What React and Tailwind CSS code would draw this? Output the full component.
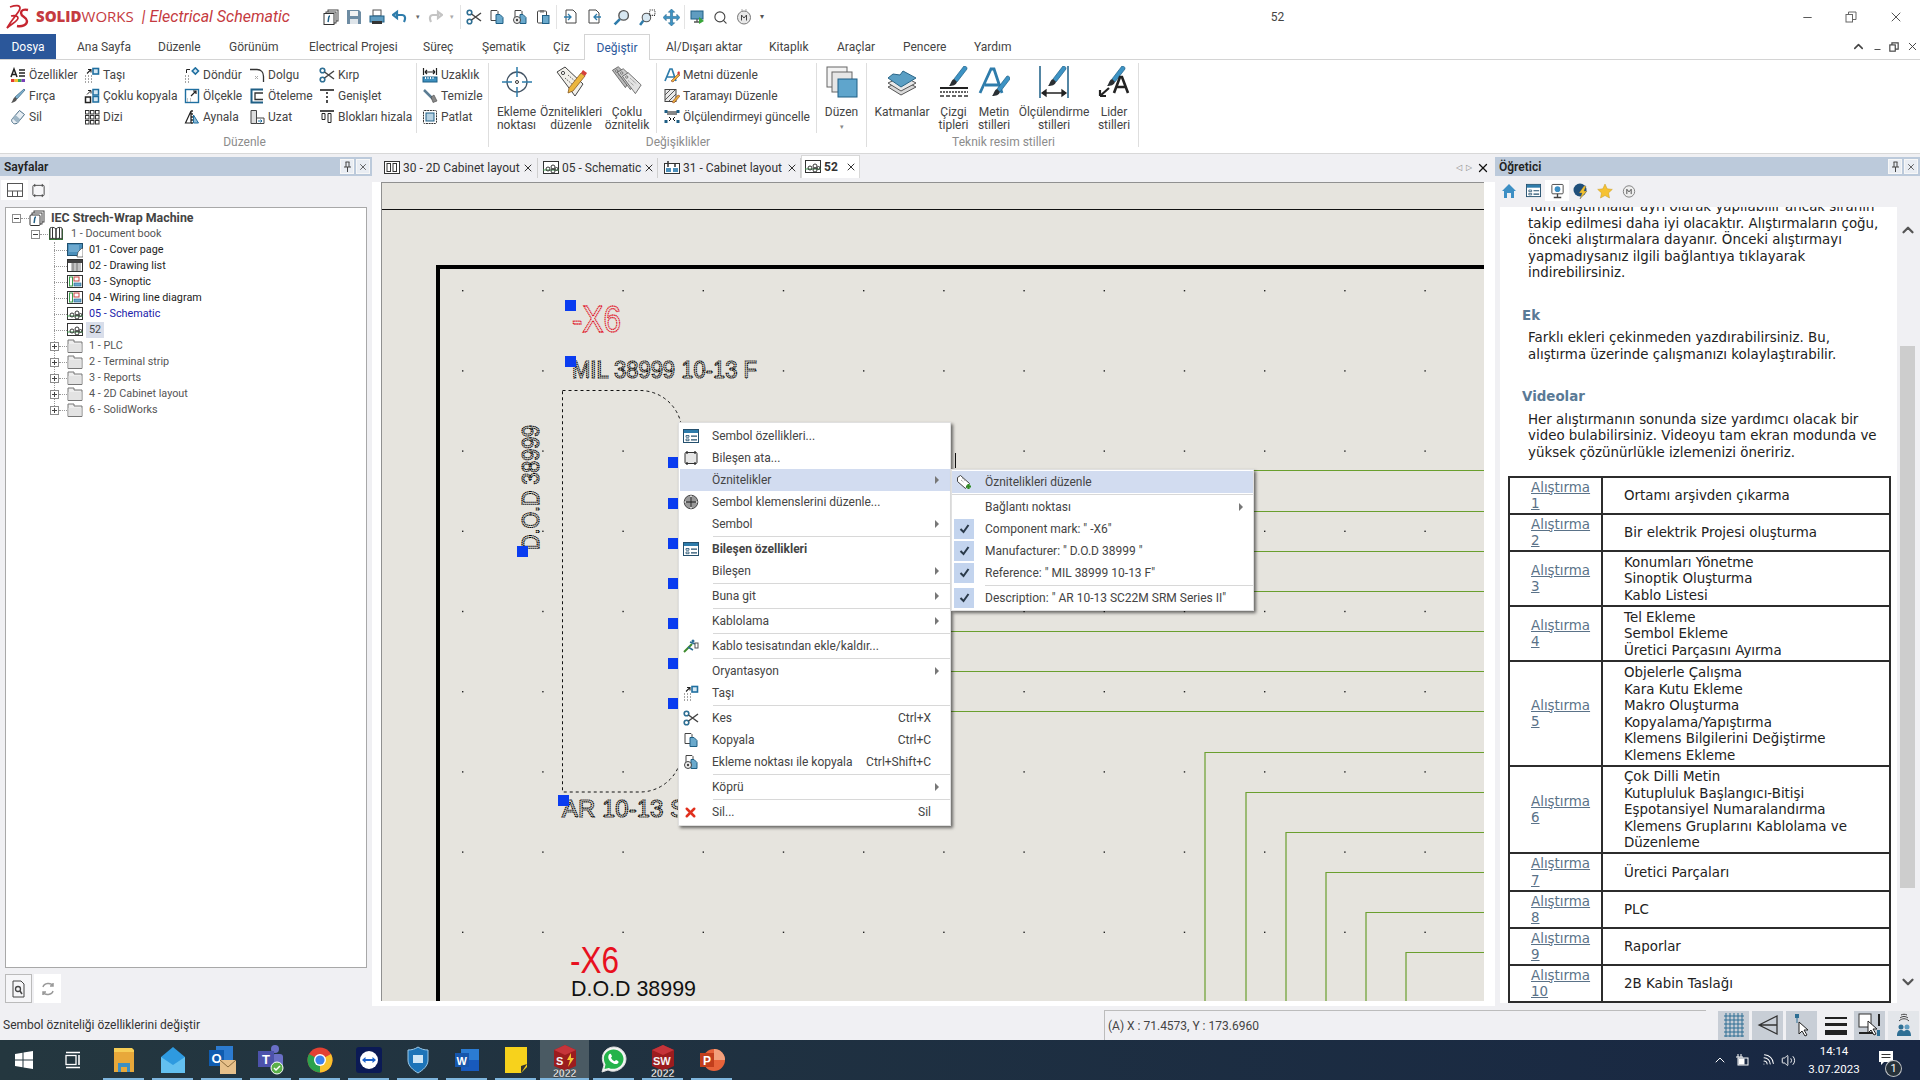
import React from "react";
import { ChevronUp, ChevronDown, Search, Wifi, Volume2, Minus, X } from "lucide-react";

const S = ({ s = 16, children }) => (
  <svg width={s} height={s} viewBox="0 0 16 16" fill="none" className="shrink-0">{children}</svg>
);
const L = ({ s = 32, children }) => (
  <svg width={s} height={s} viewBox="0 0 32 32" fill="none" className="shrink-0">{children}</svg>
);

const Scissors = () => (
  <S>
    <circle cx="3.5" cy="3.5" r="2.3" stroke="#2e6f94" strokeWidth="1.6" />
    <circle cx="3.5" cy="12.5" r="2.3" stroke="#2e6f94" strokeWidth="1.6" />
    <path d="M5.5 5L15 12M5.5 11L15 4" stroke="#444" strokeWidth="1.5" />
  </S>
);
const CopyDoc = () => (
  <S>
    <path d="M2 1.5h6l1 1v9H2z" fill="#fff" stroke="#444" />
    <path d="M7 5.5h4l3 3v6H7z" fill="#6aa9cc" stroke="#1f5f85" />
  </S>
);
const CopyPoint = () => (
  <S>
    <path d="M3 1.5h6l1 1v8H3z" fill="#fff" stroke="#444" />
    <path d="M8 5.5h3l3 3v6H8z" fill="#6aa9cc" stroke="#1f5f85" />
    <circle cx="5" cy="11" r="3.5" fill="#eee" stroke="#444" />
    <circle cx="5" cy="11" r="1.2" fill="#444" />
  </S>
);
const Paste = () => (
  <S>
    <rect x="2.5" y="2" width="9" height="12" rx="1" fill="#fff" stroke="#444" />
    <rect x="5" y="1" width="4" height="2.5" fill="#777" />
    <rect x="7.5" y="6.5" width="6.5" height="8" fill="#6aa9cc" stroke="#1f5f85" />
  </S>
);
const MoveIc = () => (
  <S>
    <path d="M1 9h1M4 9h1M7 9h1M1 12h1M4 12h1M7 12h1M1 15h1M4 15h1M7 15h1" stroke="#888" strokeWidth="1.4" />
    <rect x="9" y="1.5" width="5.5" height="5.5" fill="#d6e8f3" stroke="#1f6fa0" strokeWidth="1.6" />
    <path d="M3 6.5L6.5 3M4 2.5h3v3" stroke="#222" strokeWidth="1.1" />
  </S>
);
const ListIc = ({ s = 16 }) => (
  <S s={s}>
    <rect x="0.5" y="1.5" width="15" height="13" fill="#fff" stroke="#24506e" />
    <rect x="1" y="2" width="14" height="3" fill="#2e7cab" />
    <path d="M3 7.5h3v1.7H3zM3 11h3v1.7H3z" stroke="#24506e" strokeWidth=".8" />
    <path d="M8 8.2h6M8 11.8h6" stroke="#24506e" strokeWidth="1.2" />
  </S>
);
const CompIc = () => (
  <S>
    <rect x="2" y="2.5" width="12" height="11" rx="1" fill="#e6e6e6" stroke="#333" />
    <path d="M4 1v3M12 1v3M4 12v3M12 12v3" stroke="#333" strokeWidth="1.3" />
  </S>
);
const PlusCircle = () => (
  <S>
    <circle cx="8" cy="8" r="6.8" fill="#999" stroke="#444" />
    <path d="M8 1.5v13M1.5 8h13" stroke="#fff" strokeWidth="1.2" />
    <path d="M8 3v10M3 8h10" stroke="#333" strokeWidth="1.4" />
  </S>
);
const Cable = () => (
  <S>
    <path d="M1 14L9 6" stroke="#3d8a2c" strokeWidth="2" />
    <path d="M5 9l5 3M7 4l5 2" stroke="#2e6f94" strokeWidth="1.5" />
    <circle cx="10" cy="3" r="1.5" fill="#2e6f94" />
    <rect x="12" y="5" width="3" height="5" stroke="#555" />
  </S>
);
const TagAdd = () => (
  <S>
    <path d="M1.5 3.5l3-2 9 8-4 5-8-7z" fill="#fff" stroke="#444" />
    <path d="M5 6l3 2.5M6.5 4.5l3 2.5" stroke="#888" strokeDasharray="1 1" />
    <path d="M10 12.5h5M12.5 10v5" stroke="#2f8a24" strokeWidth="2.2" />
  </S>
);
const Brush = ({ x = 0, y = 0, k = 1 }) => (
  <g transform={`translate(${x} ${y}) scale(${k})`}>
    <path d="M21 1c2 0 3 1 3 3L14 17l-3-3z" fill="#3d93c4" stroke="#1d5f86" strokeWidth=".7" />
    <path d="M11 14l3 3c-1 3-4 4-8 4 2-2 2-6 5-7z" fill="#2a2f33" />
  </g>
);

const smallIcons = {
  props: (
    <S>
      <path d="M1 10L4 2l3 8M2.2 7.5h3.6" stroke="#222" strokeWidth="1.5" />
      <path d="M9 3h6M9 6h6M9 9h6" stroke="#222" strokeWidth="1.4" />
      <rect x="1" y="12" width="3.5" height="3" fill="#e23a2e" />
      <rect x="4.5" y="12" width="3.5" height="3" fill="#f2c12e" />
      <rect x="8" y="12" width="3.5" height="3" fill="#3aa655" />
      <rect x="11.5" y="12" width="3.5" height="3" fill="#7a3fb8" />
    </S>
  ),
  brush: (
    <S>
      <path d="M14 1l1 1-8 9-2-2z" fill="#7fb2d0" stroke="#33607c" strokeWidth=".7" />
      <path d="M5 9l2 2c-1 3-3 3-6 4 1.500-1 2-5 4-6z" fill="#555" />
    </S>
  ),
  eraser: (
    <S>
      <path d="M9.500 1.500l5 4-7 8.500c-2 1.300-4 1-5-.5-1.300-1.500-1-3 0-4z" fill="#e8eef3" stroke="#4a6d85" />
      <path d="M2.500 9.500l5 4.500 3-3.500-5-4.500z" fill="#9fb6c6" />
    </S>
  ),
  move: <MoveIc />,
  multi: (
    <S>
      <rect x="9" y="1.500" width="5.500" height="5.500" fill="#d6e8f3" stroke="#1f6fa0" strokeWidth="1.500" />
      <rect x="9" y="8.500" width="5.500" height="5.500" fill="#d6e8f3" stroke="#1f6fa0" strokeWidth="1.500" />
      <rect x="1.500" y="9" width="5" height="5.500" stroke="#222" strokeWidth="1.500" />
      <path d="M3 6.500L6.500 3M4 2.500h3v3" stroke="#222" />
    </S>
  ),
  grid: (
    <S>
      {[1, 6, 11].map((x) =>
        [1, 6, 11].map((y) => <rect key={`${x}${y}`} x={x + 0.5} y={y + 0.5} width="3.500" height="3.500" fill="#fff" stroke="#333" />)
      )}
    </S>
  ),
  rotate: (
    <S>
      <path d="M1 9h1M4 9h1M1 12h1M4 12h1M1 15h1M4 15h1" stroke="#888" strokeWidth="1.400" />
      <rect x="9" y="1.500" width="4.500" height="4.500" transform="rotate(45 11 4)" fill="#d6e8f3" stroke="#1f6fa0" strokeWidth="1.500" />
      <path d="M2.500 6V2.500H6" stroke="#222" />
    </S>
  ),
  scale: (
    <S>
      <rect x="1.500" y="1.500" width="13" height="13" stroke="#1f6fa0" strokeWidth="1.400" />
      <path d="M3 11h1M6 11h1M3 13h1M6 13h1" stroke="#888" />
      <path d="M7 8l5-5M9 3h3v3" stroke="#222" strokeWidth="1.200" />
    </S>
  ),
  mirror: (
    <S>
      <path d="M7 2L1.500 14H7z" fill="#fff" stroke="#222" strokeWidth="1.200" />
      <path d="M8 1v15" stroke="#222" strokeWidth="1.400" strokeDasharray="2 1" />
      <path d="M9.500 6l5 8h-5z" fill="#8fbcd8" stroke="#1f6fa0" />
    </S>
  ),
  fillet: (
    <S>
      <path d="M1 2.500h7c4 0 6.500 3 6.500 7V15" stroke="#333" strokeWidth="1.300" />
      <path d="M6 9l3 3M9 9l-3 3" stroke="#aaa" />
    </S>
  ),
  offset: (
    <S>
      <path d="M14 1.500H2.500v13H14" stroke="#1f5f85" strokeWidth="2" />
      <path d="M14 5H6v6.500h8" stroke="#333" strokeWidth="1.300" />
    </S>
  ),
  extend: (
    <S>
      <path d="M2 1.500h5.500v13H2z" fill="#ddd" stroke="#444" />
      <path d="M7.500 9H15v5.500H7.500z" fill="#fff" stroke="#444" />
      <path d="M9 12h4M11.500 10.500l1.500 1.500-1.500 1.500" stroke="#1f6fa0" />
    </S>
  ),
  extendLine: (
    <S>
      <path d="M1 2h14" stroke="#222" strokeWidth="1.600" />
      <path d="M8 4v2M8 8v2M8 12v3" stroke="#222" strokeWidth="1.600" />
    </S>
  ),
  align: (
    <S>
      <path d="M1 2h14" stroke="#222" strokeWidth="1.600" />
      <path d="M3 4.500h3v6H3zM9 4.500h3v9H9z" stroke="#222" />
    </S>
  ),
  distance: (
    <S>
      <path d="M1.500 1v7M14.500 1v7M3 5h10M3 5l2-2M3 5l2 2M13 5l-2-2M13 5l-2 2" stroke="#222" strokeWidth="1.200" />
      <rect x="1" y="10" width="14" height="5" fill="#3d8fbe" stroke="#1d5f86" />
      <path d="M3.500 10v2M6 10v2M8.500 10v2M11 10v2" stroke="#fff" />
    </S>
  ),
  clean: (
    <S>
      <path d="M2 2l9 9" stroke="#5b7d94" strokeWidth="2.500" />
      <path d="M9 9l3-2 3 6-4 1.500z" fill="#888" stroke="#444" strokeWidth=".6" />
    </S>
  ),
  explode: (
    <S>
      <rect x="1.500" y="1.500" width="13" height="13" rx="1" stroke="#333" strokeDasharray="2 .7" />
      <rect x="4" y="4" width="8" height="8" fill="#b7d2e3" stroke="#1f5f85" />
    </S>
  ),
  editText: (
    <S>
      <path d="M1 14L6 2h2l4 12M3 10h7" stroke="#2e7cab" strokeWidth="1.700" />
      <path d="M7 14l7-7 2 1-7 7z" fill="#e9b03a" stroke="#8d3e21" strokeWidth=".6" />
      <path d="M13 6l2-2 1 2-1 2z" fill="#d63b35" />
    </S>
  ),
  hatch: (
    <S>
      <rect x="1" y="1.500" width="11" height="12" fill="#e9e9e9" stroke="#444" />
      <path d="M1 7l5-5M1 12l10-10M5 13l7-7" stroke="#555" />
      <path d="M8 14l6-7 2 1-6 7z" fill="#e9b03a" stroke="#8d3e21" strokeWidth=".6" />
    </S>
  ),
  dim: (
    <S>
      <path d="M1 3h14M3 5h10" stroke="#111" />
      <rect x=".5" y="1" width="3" height="3" fill="#1f5f85" />
      <rect x="12.500" y="1" width="3" height="3" fill="#1f5f85" />
      <path d="M5 8l2 2-2 2M11 8l-2 2 2 2" stroke="#111" />
      <rect x=".5" y="11" width="3" height="3" fill="#1f5f85" />
      <rect x="12.500" y="11" width="3" height="3" fill="#1f5f85" />
    </S>
  ),
  scissorsSmall: <Scissors />,
};

const SmallBtn = ({ icon, label }) => (
  <div className="flex items-center gap-[3px] h-[21px] whitespace-nowrap">
    {smallIcons[icon]}
    <span>{label}</span>
  </div>
);

const Col = ({ className, items }) => (
  <div className={`flex flex-col pt-[4px] ${className}`}>
    {items.map(([icon, label]) => (
      <SmallBtn key={label} icon={icon} label={label} />
    ))}
  </div>
);

const Large = ({ className, icon, lines, arrow }) => (
  <div className={`flex flex-col items-center ${className}`}>
    <div className="h-[46px] pt-[6px] flex justify-center">{icon}</div>
    <div className="text-center leading-[13px] whitespace-nowrap">
      {lines.map((t) => (
        <div key={t}>{t}</div>
      ))}
      {arrow && <div className="text-[7px] text-[#888] leading-[12px] pt-[2px]">▾</div>}
    </div>
  </div>
);

const Sep = () => <div className="w-px h-[70px] mt-[3px] bg-[#dedede] shrink-0" />;

const Group = ({ className, title, children }) => (
  <div className={`flex flex-col h-[94px] ${className}`}>
    <div className="flex h-[74px]">{children}</div>
    <div className="text-center text-[#8c8c8c] leading-[14px] pt-px">{title}</div>
  </div>
);

const GroupEnd = () => <div className="w-px h-[84px] mt-[3px] bg-[#dedede] shrink-0" />;

const icEkleme = (
  <L>
    <circle cx="16" cy="16" r="10" stroke="#456" strokeWidth="1.300" />
    <path d="M16 1v10M16 21v10M1 16h10M21 16h10" stroke="#2e7cab" strokeWidth="1.500" />
    <circle cx="16" cy="16" r="1.500" stroke="#333" />
  </L>
);
const Tag = ({ x = 0, y = 0, fill = "#f2f0ea" }) => (
  <g transform={`translate(${x} ${y})`}>
    <path d="M2 6l8-5 18 17-8 12z" fill={fill} stroke="#444" />
    <circle cx="8" cy="7" r="1.600" fill="#fff" stroke="#444" />
    <path d="M10 12l8 7M13 9l8 7" stroke="#666" strokeDasharray="1.500 1" />
  </g>
);
const icOzn = (
  <L>
    <Tag />
    <path d="M14 22L26 7l4 3-12 15-5 2z" fill="#ecb63e" stroke="#7a4a14" strokeWidth=".7" />
    <path d="M26 7l2-3 4 3-2 3z" fill="#d6403a" />
  </L>
);
const icCoklu = (
  <L>
    <g transform="scale(.72)"><Tag fill="#b9b9b9" /></g>
    <g transform="translate(5 2) scale(.72)"><Tag fill="#cdcdcd" /></g>
    <g transform="translate(10 6) scale(.72)"><Tag fill="#e3e3e3" /></g>
  </L>
);
const icDuzen = (
  <L>
    <rect x="1" y="1" width="20" height="20" fill="#f3f3f3" stroke="#666" />
    <rect x="6" y="6" width="20" height="20" fill="#e6e6e6" stroke="#666" />
    <rect x="12" y="13" width="19" height="18" fill="#5fa5cc" stroke="#1f5f85" />
  </L>
);
const icLayers = (
  <L>
    <path d="M2 21l15-7 13 7-15 8z" fill="#d9d9d9" stroke="#555" />
    <path d="M2 17l15-7 13 7-15 8z" fill="#e8e8e8" stroke="#555" />
    <path d="M2 12l5-4 7 1 3-4 13 7-15 9z" fill="#5b9fc4" stroke="#2b6688" />
  </L>
);
const icLines = (
  <L>
    <Brush x="5" y="-1" />
    <path d="M2 22h28" stroke="#222" strokeWidth="2" />
    <path d="M2 26h28" stroke="#333" strokeWidth="1.500" strokeDasharray="2 1" />
    <path d="M2 30h28" stroke="#333" strokeWidth="1.500" strokeDasharray="4 2" />
  </L>
);
const icMetin = (
  <L>
    <path d="M2 27L13 3h3l8 24M7 19h13" stroke="#2e7cab" strokeWidth="2.800" />
    <Brush x="8" y="9" />
  </L>
);
const icOlcu = (
  <L>
    <path d="M2 0v32M30 0v32" stroke="#1d5f86" strokeWidth="1.500" />
    <Brush x="4" y="-1" />
    <path d="M4 27h24M4 27l4-3v6zM28 27l-4-3v6z" stroke="#222" strokeWidth="1.300" fill="#222" />
  </L>
);
const icLider = (
  <L>
    <Brush x="3" y="-1" />
    <path d="M2 30l9-8M2 30v-6M2 30h6" stroke="#222" strokeWidth="2.200" />
    <path d="M16 27l6-16h2l6 16M19 21h9" stroke="#222" strokeWidth="2.600" />
  </L>
);

const GroupPad = () => <div className="w-[10px] shrink-0" />;

const Ribbon = () => (
  <div className="flex h-[94px] shrink-0 bg-white border-b border-[#d8d8d8] text-[12px] text-[#444]">
    <Group className="w-[489px]" title="Düzenle">
      <GroupPad />
      <Col className="w-[74px]" items={[["props", "Özellikler"], ["brush", "Fırça"], ["eraser", "Sil"]]} />
      <Col className="w-[100px]" items={[["move", "Taşı"], ["multi", "Çoklu kopyala"], ["grid", "Dizi"]]} />
      <Col className="w-[65px]" items={[["rotate", "Döndür"], ["scale", "Ölçekle"], ["mirror", "Aynala"]]} />
      <Col className="w-[70px]" items={[["fillet", "Dolgu"], ["offset", "Öteleme"], ["extend", "Uzat"]]} />
      <Col className="w-[97px]" items={[["scissorsSmall", "Kırp"], ["extendLine", "Genişlet"], ["align", "Blokları hizala"]]} />
      <Sep />
      <Col className="ml-[5px] w-[66px]" items={[["distance", "Uzaklık"], ["clean", "Temizle"], ["explode", "Patlat"]]} />
      <GroupEnd />
    </Group>
    <Group className="w-[378px]" title="Değişiklikler">
      <Large className="w-[55px]" icon={icEkleme} lines={["Ekleme", "noktası"]} />
      <Large className="w-[54px]" icon={icOzn} lines={["Öznitelikleri", "düzenle"]} />
      <Large className="w-[58px]" icon={icCoklu} lines={["Çoklu", "öznitelik"]} />
      <Sep />
      <Col className="ml-[7px] w-[152px]" items={[["editText", "Metni düzenle"], ["hatch", "Taramayı Düzenle"], ["dim", "Ölçülendirmeyi güncelle"]]} />
      <Sep />
      <Large className="w-[49px]" icon={icDuzen} lines={["Düzen"]} arrow />
      <GroupEnd />
    </Group>
    <Group className="w-[273px]" title="Teknik resim stilleri">
      <Large className="w-[70px]" icon={icLayers} lines={["Katmanlar"]} />
      <Large className="w-[33px]" icon={icLines} lines={["Çizgi", "tipleri"]} />
      <Large className="w-[48px]" icon={icMetin} lines={["Metin", "stilleri"]} />
      <Large className="w-[72px]" icon={icOlcu} lines={["Ölçülendirme", "stilleri"]} />
      <Large className="w-[48px]" icon={icLider} lines={["Lider", "stilleri"]} />
      <GroupEnd />
    </Group>
  </div>
);

const Qat = ({ children, className = "" }) => <div className={`flex items-center justify-center ${className}`}>{children}</div>;

const TitleBar = () => (
  <div className="flex items-center h-[34px] shrink-0 bg-white relative">
    <svg width="26" height="26" viewBox="0 0 26 26" fill="none" className="ml-[4px] shrink-0">
      <path d="M6 3c6-2 10-2 10 1 0 4-6 8-13 20 6-5 11-7 11-10 0-2-3-3-7-2" stroke="#c6252f" strokeWidth="1.700" />
      <path d="M24 6c-4-1-7 0-7 3 0 4 6 4 6 8 0 4-5 6-10 5" stroke="#c6252f" strokeWidth="2.400" />
    </svg>
    <div className="ml-[6px] w-[257px] text-[#c53a40] whitespace-nowrap flex items-baseline font-['Open_Sans',sans-serif]">
      <span className="text-[15px] font-extrabold">SOLID</span>
      <span className="text-[15px]">WORKS</span>
      <span className="text-[16px] italic ml-[8px] font-['Roboto',sans-serif]">| Electrical Schematic</span>
    </div>
    <div className="flex items-center ml-[26px]">
      <Qat className="w-[23px]"><svg width="16" height="16" viewBox="0 0 16 16" fill="none"><rect x="5" y="1" width="10" height="11" fill="#fff" stroke="#444" /><rect x="3" y="3" width="10" height="11" fill="#fff" stroke="#444" /><rect x="1" y="4.500" width="10" height="11" fill="#fff" stroke="#333" /><path d="M7 7c-2 0-1 3-2 6" stroke="#1f5f85" strokeWidth="1.500" /></svg></Qat>
      <Qat className="w-[23px]"><svg width="16" height="16" viewBox="0 0 16 16"><path d="M1 1h12l2 2v12H1z" fill="#6e8ca3" /><rect x="4" y="2" width="8" height="5" fill="#f3f3f3" /><rect x="4" y="10" width="8" height="5" fill="#dfe5ea" /></svg></Qat>
      <Qat className="w-[23px]"><svg width="16" height="16" viewBox="0 0 16 16"><rect x="4" y="1" width="8" height="6" fill="#fff" stroke="#555" /><rect x="1" y="7" width="14" height="6" fill="#5f9cc0" stroke="#1f5f85" /><rect x="3" y="12" width="10" height="3" fill="#333" /></svg></Qat>
      <Qat className="w-[23px]"><svg width="16" height="16" viewBox="0 0 16 16" fill="none"><path d="M1 6l4-3v6zM5 6h5c3 0 4 3 2 7" stroke="#2e7cab" strokeWidth="2.200" /></svg></Qat>
      <Qat className="w-[14px] text-[7px] text-[#666]">▾</Qat>
      <Qat className="w-[20px]"><svg width="16" height="16" viewBox="0 0 16 16" fill="none"><path d="M15 6l-4-3v6zM11 6H6c-3 0-4 3-2 7" stroke="#c4c4c4" strokeWidth="2.200" /></svg></Qat>
      <Qat className="w-[14px] text-[7px] text-[#aaa]">▾</Qat>
      <div className="w-px h-[24px] bg-[#e3e3e3] mx-[1px]" />
      <Qat className="w-[23px]"><Scissors /></Qat>
      <Qat className="w-[23px]"><CopyDoc /></Qat>
      <Qat className="w-[23px]"><CopyPoint /></Qat>
      <Qat className="w-[23px]"><Paste /></Qat>
      <div className="w-px h-[24px] bg-[#e3e3e3] mx-[2px]" />
      <Qat className="w-[23px]"><svg width="16" height="16" viewBox="0 0 16 16" fill="none"><path d="M3 1h7l3 3v10H3z" fill="#fff" stroke="#444" /><path d="M1 8h7M5 5l3 3-3 3" stroke="#2e7cab" strokeWidth="1.300" /></svg></Qat>
      <Qat className="w-[23px]"><svg width="16" height="16" viewBox="0 0 16 16" fill="none"><path d="M3 1h7l3 3v10H3z" fill="#fff" stroke="#444" /><path d="M15 8H8M11 5L8 8l3 3" stroke="#2e7cab" strokeWidth="1.300" /></svg></Qat>
      <Qat className="w-[27px] ml-[3px]"><svg width="17" height="17" viewBox="0 0 16 16" fill="none"><circle cx="10" cy="6" r="4.500" fill="#d8e8f2" stroke="#555" strokeWidth="1.300" /><path d="M6.500 9.500L1.500 14.500" stroke="#2e7cab" strokeWidth="2.500" /></svg></Qat>
      <Qat className="w-[24px]"><svg width="17" height="17" viewBox="0 0 16 16" fill="none"><circle cx="7" cy="8" r="4" fill="#d8e8f2" stroke="#555" /><path d="M4 11l-3 4" stroke="#2e7cab" strokeWidth="2.400" /><rect x="10" y="1" width="5" height="5" stroke="#222" strokeDasharray="1 1" /></svg></Qat>
      <Qat className="w-[24px]"><svg width="17" height="17" viewBox="0 0 16 16" fill="none"><path d="M8 0l3 3H9v4h4V5l3 3-3 3V9H9v4h2l-3 3-3-3h2V9H3v2L0 8l3-3v2h4V3H5z" fill="#3d93c4" stroke="#1d5f86" strokeWidth=".5" /></svg></Qat>
      <div className="w-px h-[24px] bg-[#e3e3e3] mx-[1px]" />
      <Qat className="w-[23px]"><svg width="16" height="16" viewBox="0 0 16 16" fill="none"><rect x="1" y="2" width="12" height="8" fill="#5f9cc0" stroke="#1f5f85" /><path d="M7 10v3M4 13h6" stroke="#555" strokeWidth="1.300" /><path d="M9 8l5 4-5 3z" fill="#3aa63a" /></svg></Qat>
      <Qat className="w-[23px]"><Search size={15} color="#444" strokeWidth={1.800} /></Qat>
      <Qat className="w-[23px]"><svg width="16" height="16" viewBox="0 0 16 16" fill="none"><circle cx="8" cy="8.500" r="6.500" fill="#e8e8e8" stroke="#777" /><path d="M5.500 11.500V6l2.500 3 2.500-3v5.500" stroke="#444" /><path d="M5.500 1h1M9.500 1h1" stroke="#555" /></svg></Qat>
      <Qat className="w-[13px] text-[8px] text-[#555]">▾</Qat>
    </div>
    <div className="flex-1 text-center text-[12px] text-[#444] pr-[14px]">52</div>
    <div className="flex items-center text-[#555] pr-[16px] gap-[31px]">
      <Minus size={13} strokeWidth={1.800} />
      <svg width="12" height="12" viewBox="0 0 12 12" fill="none" stroke="#666"><rect x="1" y="3.500" width="6.500" height="7.500" /><path d="M3.500 3.500V1H11v7.500H7.500" /></svg>
      <X size={16} strokeWidth={1.500} color="#555" />
    </div>
  </div>
);

const tabs = [
  ["Ana Sayfa", "w-[81px]"],
  ["Düzenle", "w-[71px]"],
  ["Görünüm", "w-[80px]"],
  ["Electrical Projesi", "w-[114px]"],
  ["Süreç", "w-[59px]"],
  ["Şematik", "w-[71px]"],
  ["Çiz", "w-[31px]"],
];
const tabs2 = [
  ["Al/Dışarı aktar", "w-[103px]"],
  ["Kitaplık", "w-[68px]"],
  ["Araçlar", "w-[66px]"],
  ["Pencere", "w-[71px]"],
  ["Yardım", "w-[60px]"],
];

const TabBar = () => (
  <div className="flex items-stretch h-[26px] shrink-0 bg-white border-b border-[#d4d4d4] text-[12px] text-[#444] relative">
    <div className="w-[56px] bg-[#2b579a] text-white flex items-center justify-center mr-[21px]">Dosya</div>
    {tabs.map(([t, w]) => (
      <div key={t} className={`flex items-center whitespace-nowrap ${w}`}>{t}</div>
    ))}
    <div className="w-[66px] -mb-px bg-white border border-b-0 border-[#d4d4d4] text-[#2b579a] flex items-center justify-center mr-[16px]">Değiştir</div>
    {tabs2.map(([t, w]) => (
      <div key={t} className={`flex items-center whitespace-nowrap ${w}`}>{t}</div>
    ))}
    <div className="flex-1" />
    <div className="flex items-center gap-[7px] pr-[1px] text-[#444]">
      <ChevronUp size={15} strokeWidth={2.500} />
      <Minus size={9} strokeWidth={2.500} className="mt-[5px]" />
      <svg width="10" height="10" viewBox="0 0 12 12" fill="none" stroke="#444" strokeWidth="1.400"><rect x="1" y="3.500" width="6.500" height="7.500" /><path d="M3.500 3.500V1H11v7.500H7.500" /></svg>
      <X size={13} strokeWidth={1.800} />
    </div>
  </div>
);

const PanelHeader = ({ title }) => (
  <div className="flex items-center h-[19px] bg-[#bccadb] text-[12px] font-semibold text-[#222] pl-[4px] pr-[2px] shrink-0">
    <span className="flex-1">{title}</span>
    <div className="w-[14px] h-[15px] bg-[#e9edf3] border border-[#f7f7f7] flex items-center justify-center">
      <svg width="9" height="11" viewBox="0 0 9 11" fill="none" stroke="#444"><path d="M2.500 1h4M3 1v5M6 1v5M1 6h7M4.500 6v5" /></svg>
    </div>
    <div className="ml-[2px] w-[14px] h-[15px] bg-[#e9edf3] border border-[#f7f7f7] flex items-center justify-center">
      <X size={10} strokeWidth={1.800} color="#333" />
    </div>
  </div>
);

const Expander = ({ plus }) => (
  <div className="w-[9px] h-[9px] bg-white border border-[#8c8c8c] flex items-center justify-center shrink-0 relative">
    <div className="w-[5px] h-px bg-[#444]" />
    {plus && <div className="absolute w-px h-[5px] bg-[#444]" />}
  </div>
);

const Dots = ({ className }) => <div className={`h-0 border-t border-dotted border-[#999] shrink-0 ${className}`} />;

const IcProject = () => (
  <svg width="16" height="16" viewBox="0 0 16 16" fill="none"><rect x="5" y="1" width="10" height="11" fill="#fff" stroke="#444" /><rect x="3" y="3" width="10" height="11" fill="#fff" stroke="#444" /><rect x="1" y="5" width="10" height="10.500" rx="1" fill="#fff" stroke="#333" /><path d="M7 7c-2 0-1 3-2 6" stroke="#1f5f85" strokeWidth="1.500" /></svg>
);
const IcBook = () => (
  <svg width="16" height="16" viewBox="0 0 16 16" fill="none"><path d="M1 3h14v11H1z" fill="#3a7e3a" /><path d="M2 2c2-1 4-1 6 1v10c-2-1-4-1-6 0zM14 2c-2-1-4-1-6 1v10c2-1 4-1 6 0z" fill="#fff" stroke="#333" /><path d="M4.500 2v10M11.500 2v10" stroke="#333" /></svg>
);
const IcCover = () => (
  <svg width="16" height="16" viewBox="0 0 16 16" fill="none"><rect x=".5" y="1.500" width="15" height="12" fill="#4b8fbb" stroke="#1f4f6e" /><rect x="2" y="3" width="10" height="7" fill="#6da9cf" /><path d="M11 10l4-4 1 1v8h-6z" fill="#fff" stroke="#333" strokeWidth=".6" /></svg>
);
const IcList = () => (
  <svg width="16" height="16" viewBox="0 0 16 16" fill="none"><rect x=".5" y="1.500" width="15" height="12" fill="#fff" stroke="#333" /><rect x="1" y="2" width="14" height="3" fill="#444" /><path d="M4 6h10M4 8h10M4 10h10M4 12h10M6 5v8M10 5v8" stroke="#555" strokeWidth=".7" /></svg>
);
const IcSyn = () => (
  <svg width="16" height="16" viewBox="0 0 16 16" fill="none"><rect x=".5" y="1.500" width="15" height="12" fill="#fff" stroke="#333" /><rect x="2.500" y="3" width="3" height="9" stroke="#3a9a4a" /><rect x="7" y="3" width="5" height="4" stroke="#c44" /><rect x="7" y="9" width="7" height="3" fill="#6da9cf" stroke="#1f5f85" strokeWidth=".6" /></svg>
);
const IcSch = () => (
  <svg width="16" height="16" viewBox="0 0 16 16" fill="none"><rect x=".5" y="1.500" width="15" height="12" fill="#fff" stroke="#333" /><path d="M0 10h16" stroke="#3a9a4a" /><circle cx="5" cy="9" r="2" stroke="#333" /><circle cx="10" cy="7" r="2" stroke="#333" /><circle cx="10" cy="11" r="2" stroke="#333" /><circle cx="13.500" cy="9" r="1.500" stroke="#333" /></svg>
);
const IcCabinet = () => (
  <svg width="16" height="16" viewBox="0 0 16 16" fill="none"><rect x=".5" y="1.500" width="15" height="12" fill="#fff" stroke="#333" /><rect x="3" y="3.500" width="3.500" height="8" stroke="#333" /><rect x="9" y="3.500" width="3.500" height="8" stroke="#333" /></svg>
);
const IcCabinet2 = () => (
  <svg width="16" height="16" viewBox="0 0 16 16" fill="none"><rect x=".5" y="3.500" width="15" height="10" fill="#fff" stroke="#333" /><rect x="2" y="8" width="5" height="4" fill="#4b8fbb" /><rect x="9" y="8" width="5" height="4" fill="#4b8fbb" /><path d="M4 1v6M11 3v4" stroke="#333" strokeWidth="1.500" /></svg>
);
const IcFolder = () => (
  <svg width="16" height="16" viewBox="0 0 16 16" fill="none"><path d="M1 2h6v2h8v10.500H1z" fill="#eee" stroke="#777" /><path d="M1.500 6h13v8h-13z" fill="#e3e3e3" /></svg>
);

const pages = [
  [<IcCover />, "01 - Cover page", "text-[#222]"],
  [<IcList />, "02 - Drawing list", "text-[#222]"],
  [<IcSyn />, "03 - Synoptic", "text-[#222]"],
  [<IcSyn />, "04 - Wiring line diagram", "text-[#222]"],
  [<IcSch />, "05 - Schematic", "text-[#2222aa]"],
];
const folders = ["1 - PLC", "2 - Terminal strip", "3 - Reports", "4 - 2D Cabinet layout", "6 - SolidWorks"];

const Tree = () => (
  <div className="mx-[5px] h-[761px] bg-white border border-[#a8a8a8] text-[10.800px] text-[#555] pt-[2px] relative">
    <div className="absolute left-[48px] top-[34px] h-[168px] border-l border-dotted border-[#999]" />
    <div className="flex items-center h-[16px] pl-[6px]">
      <Expander />
      <Dots className="w-[8px]" />
      <IcProject />
      <span className="ml-[6px] font-bold text-[#444] text-[12.400px] whitespace-nowrap">IEC Strech-Wrap Machine</span>
    </div>
    <div className="flex items-center h-[16px] pl-[25px]">
      <Expander />
      <Dots className="w-[8px]" />
      <IcBook />
      <span className="ml-[7px]">1 - Document book</span>
    </div>
    {pages.map(([icon, label, color]) => (
      <div key={label} className="flex items-center h-[16px] pl-[48px]">
        <Dots className="w-[13px]" />
        {icon}
        <span className={`ml-[6px] ${color}`}>{label}</span>
      </div>
    ))}
    <div className="flex items-center h-[16px] pl-[48px]">
      <Dots className="w-[13px]" />
      <IcSch />
      <span className="ml-[3px] px-[3px] bg-[#d9deea] text-[#444]">52</span>
    </div>
    {folders.map((f) => (
      <div key={f} className="flex items-center h-[16px] pl-[44px]">
        <Expander plus />
        <Dots className="w-[8px]" />
        <IcFolder />
        <span className="ml-[6px]">{f}</span>
      </div>
    ))}
  </div>
);

const LeftPanel = () => (
  <div className="w-[372px] shrink-0 flex flex-col pt-[3px]">
    <PanelHeader title="Sayfalar" />
    <div className="flex h-[31px] pt-[4px] items-start shrink-0">
      <div className="w-[27px] h-[20px] ml-px bg-white flex items-center justify-center">
        <svg width="16" height="14" viewBox="0 0 16 14" fill="none" stroke="#555"><rect x=".5" y=".5" width="15" height="13" /><path d="M.5 8h15M5.500 8v5.500M10.500 8v5.500" /></svg>
      </div>
      <div className="w-[21px] h-[20px] bg-[#f6f6f8] flex items-center justify-center">
        <svg width="15" height="15" viewBox="0 0 16 16" fill="none" stroke="#444"><rect x="2" y="2.500" width="12" height="11" rx="1" /><path d="M4 1v3M12 1v3M4 12v3M12 12v3" /></svg>
      </div>
    </div>
    <Tree />
    <div className="flex mt-[6px] ml-[5px] h-[29px]">
      <div className="w-[27px] h-[29px] border border-[#bbb] bg-[#f6f6f8] flex items-center justify-center">
        <svg width="14" height="18" viewBox="0 0 14 18" fill="none" stroke="#444"><path d="M1 1h8l3 3v13H1z" /><circle cx="6" cy="9" r="2.500" strokeWidth="1.300" /><path d="M8 11l2 3" strokeWidth="1.500" /></svg>
      </div>
      <div className="ml-[2px] w-[27px] h-[29px] bg-white flex items-center justify-center">
        <svg width="14" height="16" viewBox="0 0 14 16" fill="none" stroke="#999" strokeWidth="1.500"><path d="M2 6c1-4 8-5 10-1M12 10c-1 4-8 5-10 1M12 2v3H9M2 14v-3h3" /></svg>
      </div>
    </div>
  </div>
);

const docTabs = [
  { label: "30 - 2D Cabinet layout", icon: <IcCabinet />, w: "w-[166px]", pl: "pl-[12px]", mr: "mr-[3px]" },
  { label: "05 - Schematic", icon: <IcSch />, w: "w-[120px]", pl: "pl-[5px]", mr: "mr-[2px]" },
  { label: "31 - Cabinet layout", icon: <IcCabinet2 />, w: "w-[143px]", pl: "pl-[6px]", mr: "mr-[2px]" },
];

const DocTab = ({ label, icon, w, pl, mr }) => (
  <div className={`flex items-center h-[20px] border-r border-[#d0d0d0] shrink-0 ${w} ${pl}`}>
    {icon}
    <span className="ml-[3px] flex-1 whitespace-nowrap">{label}</span>
    <X size={12} strokeWidth={2} className={mr} />
  </div>
);

const gridX = Array.from({ length: 13 }, (_, i) => 462 + i * 80.2);
const gridY = Array.from({ length: 9 }, (_, i) => 290 + i * 80.2);
const wires = [470, 511, 551, 591, 631, 671, 711];
const ells = [
  [1205, 752.5],
  [1246, 792.5],
  [1286, 832.5],
  [1326, 872.5],
  [1366, 912.5],
  [1406, 952.5],
];
const handles = [
  [565, 300], [565, 356], [517, 546], [558, 795],
  [668, 457], [668, 498], [668, 538], [668, 578], [668, 618], [668, 658], [668, 698],
];

const Drawing = () => (
  <svg width="1103" height="819" viewBox="381 182 1103 819" fill="none" className="block font-['Liberation_Sans',sans-serif]">
    <rect x="381" y="182" width="1103" height="819" fill="#e6e4de" />
    <path d="M381 182.500H1484M381.500 182V1001" stroke="#909090" />
    <path d="M382 209.500H1484" stroke="#111" />
    <path d="M438 265v736M436 267H1484" stroke="#000" strokeWidth="4" />
    {gridX.map((x) => gridY.map((y) => <rect key={`${x}-${y}`} x={x} y={y} width="1.400" height="1.400" fill="#222" />))}
    {wires.map((y) => (
      <path key={y} d={`M950 ${y}.5H1484`} stroke="#6a9f2e" strokeWidth="1.200" />
    ))}
    {ells.map(([x, y]) => (
      <path key={x} d={`M${x} 1001V${y}H1484`} stroke="#6a9f2e" strokeWidth="1.200" />
    ))}
    <path d="M955.500 453V468" stroke="#111" />
    <path d="M562.500 390.500H640A42 42 0 0 1 682 432V750A42 42 0 0 1 640 792H562.500Z" stroke="#111" strokeDasharray="3 3" />
    <text x="572" y="332" fontSize="37" textLength="49" lengthAdjust="spacingAndGlyphs" stroke="#e0142a" strokeWidth="1.300" strokeDasharray="1.400 .6">-X6</text>
    <text x="572" y="378" fontSize="24" textLength="185" lengthAdjust="spacingAndGlyphs" stroke="#000" strokeWidth="1.200" strokeDasharray="1.400 .6">MIL 38999 10-13 F</text>
    <text x="539" y="550" fontSize="24" textLength="125" lengthAdjust="spacingAndGlyphs" transform="rotate(-90 539 550)" stroke="#000" strokeWidth="1.200" strokeDasharray="1.400 .6">D.O.D 38999</text>
    <text x="562" y="817" fontSize="24" stroke="#000" strokeWidth="1.200" strokeDasharray="1.400 .6">AR 10-13 SC22M SRM Series II</text>
    <text x="570" y="973" fontSize="37" textLength="49" lengthAdjust="spacingAndGlyphs" fill="#e8101e">-X6</text>
    <text x="571" y="996" fontSize="22" textLength="125" lengthAdjust="spacingAndGlyphs" fill="#111">D.O.D 38999</text>
    {handles.map(([x, y]) => (
      <rect key={`${x}${y}`} x={x} y={y} width="11" height="11" fill="#0a3cf0" />
    ))}
  </svg>
);

const CenterPane = () => (
  <div className="flex-1 flex flex-col min-w-0">
    <div className="flex items-end h-[28px] shrink-0 pb-[4px] text-[12px] text-[#333]">
      {docTabs.map((t) => (
        <DocTab key={t.label} {...t} />
      ))}
      <div className="flex items-center h-[23px] w-[59px] bg-white border-x border-t border-[#d8d8d8] pl-[3px] shrink-0">
        <IcSch />
        <span className="ml-[3px] font-bold flex-1">52</span>
        <X size={12} strokeWidth={2} className="mr-[2px]" />
      </div>
      <div className="flex-1" />
      <div className="flex items-center h-[20px] gap-[4px] pr-[5px] text-[#888]">
        <span className="text-[8px]">◁</span>
        <span className="text-[8px]">▷</span>
        <X size={14} strokeWidth={2.200} color="#111" />
      </div>
    </div>
    <div className="flex-1 bg-white pl-[9px] pr-[15px] pb-[5px] min-h-0">
      <Drawing />
    </div>
  </div>
);

const lines1 = [
  "Tüm alıştırmalar ayrı olarak yapılabilir ancak sıranın",
  "takip edilmesi daha iyi olacaktır. Alıştırmaların çoğu,",
  "önceki alıştırmalara dayanır. Önceki alıştırmayı",
  "yapmadıysanız ilgili bağlantıya tıklayarak",
  "indirebilirsiniz.",
];
const lines2 = ["Farklı ekleri çekinmeden yazdırabilirsiniz. Bu,", "alıştırma üzerinde çalışmanızı kolaylaştırabilir."];
const lines3 = [
  "Her alıştırmanın sonunda size yardımcı olacak bir",
  "video bulabilirsiniz. Videoyu tam ekran modunda ve",
  "yüksek çözünürlükle izlemenizi öneririz.",
];

const rows = [
  ["1", ["Ortamı arşivden çıkarma"], "h-[37px]"],
  ["2", ["Bir elektrik Projesi oluşturma"], "h-[37px]"],
  ["3", ["Konumları Yönetme", "Sinoptik Oluşturma", "Kablo Listesi"], "h-[55px]"],
  ["4", ["Tel Ekleme", "Sembol Ekleme", "Üretici Parçasını Ayırma"], "h-[55px]"],
  ["5", ["Objelerle Çalışma", "Kara Kutu Ekleme", "Makro Oluşturma", "Kopyalama/Yapıştırma", "Klemens Bilgilerini Değiştirme", "Klemens Ekleme"], "h-[105px]"],
  ["6", ["Çok Dilli Metin", "Kutupluluk Başlangıcı-Bitişi", "Eşpotansiyel Numaralandırma", "Klemens Gruplarını Kablolama ve", "Düzenleme"], "h-[87px]"],
  ["7", ["Üretici Parçaları"], "h-[38px]"],
  ["8", ["PLC"], "h-[37px]"],
  ["9", ["Raporlar"], "h-[37px]"],
  ["10", ["2B Kabin Taslağı"], "h-[37px]"],
];

const Para = ({ lines, className = "" }) => (
  <div className={`pl-[28px] whitespace-nowrap ${className}`}>
    {lines.map((l) => (
      <div key={l}>{l}</div>
    ))}
  </div>
);

const RightPanel = () => (
  <div className="w-[425px] shrink-0 flex flex-col pt-[3px]">
    <PanelHeader title="Öğretici" />
    <div className="flex h-[31px] pt-[4px] pl-[2px] items-start shrink-0">
      {[
        <svg key="home" width="16" height="16" viewBox="0 0 16 16"><path d="M8 1l7 7h-2v7h-3v-5H6v5H3V8H1z" fill="#3d8fc4" /></svg>,
        <ListIc key="list" s={15} />,
        <svg key="screen" width="15" height="16" viewBox="0 0 16 16" fill="none"><rect x="2" y="1" width="12" height="10" rx="1" fill="#fff" stroke="#444" /><circle cx="8" cy="6" r="3" fill="#3d8fc4" /><path d="M8 11v3M4 15h8" stroke="#444" strokeWidth="1.500" /></svg>,
        <svg key="bolt" width="16" height="16" viewBox="0 0 16 16"><circle cx="7" cy="7" r="6.500" fill="#1f4f7a" /><path d="M11 3l-5 7h3l-2 6 7-8h-3l2-5z" fill="#f2c12e" stroke="#555" strokeWidth=".4" /></svg>,
        <svg key="star" width="16" height="16" viewBox="0 0 16 16"><path d="M8 1l2.200 4.800 5.100.6-3.800 3.500 1 5.100L8 12.500 3.500 15l1-5.100L.7 6.400l5.100-.6z" fill="#f6c232" stroke="#c79a20" strokeWidth=".5" /></svg>,
        <svg key="m" width="14" height="16" viewBox="0 0 16 16" fill="none"><circle cx="8" cy="8.500" r="6.500" fill="#eee" stroke="#777" /><path d="M5.500 11.500V6l2.500 3 2.500-3v5.500" stroke="#444" /></svg>,
      ].map((ic, i) => (
        <div key={i} className={`w-[24px] h-[21px] flex items-center justify-center ${i === 2 ? "bg-white" : ""}`}>{ic}</div>
      ))}
    </div>
    <div className="flex h-[796px] ml-[5px]">
      <div className="w-[397px] h-[796px] bg-white overflow-hidden font-['DejaVu_Sans',sans-serif] text-[13.400px] leading-[16.500px] text-[#222]">
        <div className="-mt-[8px]">
          <Para lines={lines1} />
          <div className="mt-[26px] pl-[22px] font-bold text-[#5a7a96]">Ek</div>
          <Para lines={lines2} className="mt-[6px]" />
          <div className="mt-[26px] pl-[22px] font-bold text-[#5a7a96]">Videolar</div>
          <Para lines={lines3} className="mt-[6px]" />
          <table className="mt-[15px] ml-[8px] w-[381px] table-fixed border-collapse">
            <colgroup>
              <col className="w-[93px]" />
              <col className="w-[288px]" />
            </colgroup>
            <tbody>
              {rows.map(([n, items, h]) => (
                <tr key={n} className={h}>
                  <td className="border-2 border-[#2c2c2c] pl-[21px] pt-px text-[#5a7288] underline">
                    Alıştırma<br />{n}
                  </td>
                  <td className="border-2 border-[#2c2c2c] pl-[21px] pt-[2px] whitespace-nowrap">
                    {items.map((t) => (
                      <div key={t}>{t}</div>
                    ))}
                  </td>
                </tr>
              ))}
            </tbody>
          </table>
        </div>
      </div>
      <div className="w-[22px] flex flex-col items-center pt-[14px] text-[#555]">
        <ChevronUp size={18} strokeWidth={3} />
        <div className="w-[15px] h-[542px] mt-[107px] bg-[#cdcdcd] -ml-[2px]" />
        <ChevronDown size={18} strokeWidth={3} className="mt-[85px]" />
      </div>
    </div>
  </div>
);

const menuItems = [
  { label: "Sembol özellikleri...", icon: <ListIc /> },
  { label: "Bileşen ata...", icon: <CompIc /> },
  { label: "Öznitelikler", arrow: true, hi: true },
  { label: "Sembol klemenslerini düzenle...", icon: <PlusCircle /> },
  { label: "Sembol", arrow: true, sep: true },
  { label: "Bileşen özellikleri", icon: <ListIc />, bold: true },
  { label: "Bileşen", arrow: true, sep: true },
  { label: "Buna git", arrow: true, sep: true },
  { label: "Kablolama", arrow: true, sep: true },
  { label: "Kablo tesisatından ekle/kaldır...", icon: <Cable />, sep: true },
  { label: "Oryantasyon", arrow: true },
  { label: "Taşı", icon: <MoveIc />, sep: true },
  { label: "Kes", icon: <Scissors />, key: "Ctrl+X" },
  { label: "Kopyala", icon: <CopyDoc />, key: "Ctrl+C" },
  { label: "Ekleme noktası ile kopyala", icon: <CopyPoint />, key: "Ctrl+Shift+C", sep: true },
  { label: "Köprü", arrow: true, sep: true },
  { label: "Sil...", icon: <X size={15} strokeWidth={4} color="#e0301e" />, key: "Sil" },
];

const Arrow = () => <div className="w-0 h-0 border-y-[4px] border-y-transparent border-l-[4px] border-l-[#777]" />;

const ContextMenu = () => (
  <div className="absolute left-[678px] top-[422px] w-[273px] bg-white py-[2px] pl-px shadow-[2px_2px_3px_rgba(0,0,0,0.55)] border border-[#e0e0e0] text-[12px] text-[#444]">
    {menuItems.map((m) => (
      <React.Fragment key={m.label}>
        <div className={`flex items-center h-[22px] ${m.hi ? "bg-[#d2dcf0]" : ""}`}>
          <div className="w-[32px] flex justify-start shrink-0 pl-[3px]">{m.icon}</div>
          <span className={`flex-1 whitespace-nowrap ${m.bold ? "font-bold" : ""}`}>{m.label}</span>
          {m.key && <span className="pr-[19px]">{m.key}</span>}
          {m.arrow && <div className="pr-[11px]"><Arrow /></div>}
        </div>
        {m.sep && <div className="ml-[33px] my-px h-px bg-[#d8d8d8]" />}
      </React.Fragment>
    ))}
  </div>
);

const Check = () => (
  <div className="w-[20px] h-[20px] bg-[#c3d4ee] flex items-center justify-center ml-[2px] shrink-0">
    <svg width="11" height="10" viewBox="0 0 11 10" fill="none"><path d="M1.500 5l3 3 5-7" stroke="#2a3a4a" strokeWidth="2" /></svg>
  </div>
);

const subItems = [
  ["Component mark: \" -X6\""],
  ["Manufacturer: \" D.O.D 38999 \""],
  ["Reference: \" MIL 38999 10-13 F\""],
];

const SubMenu = () => (
  <div className="absolute left-[951px] top-[469px] w-[303px] bg-white py-px shadow-[2px_2px_3px_rgba(0,0,0,0.55)] border border-[#e0e0e0] text-[12px] text-[#444]">
    <div className="flex items-center h-[22px] bg-[#d2dcf0] whitespace-nowrap">
      <div className="w-[33px] flex justify-start pl-[4px] shrink-0"><TagAdd /></div>
      Öznitelikleri düzenle
    </div>
    <div className="my-px h-px bg-[#d8d8d8]" />
    <div className="flex items-center h-[22px]">
      <span className="pl-[33px] flex-1">Bağlantı noktası</span>
      <div className="pr-[10px]"><Arrow /></div>
    </div>
    {subItems.map(([t]) => (
      <div key={t} className="flex items-center h-[22px] whitespace-nowrap">
        <Check />
        <span className="ml-[11px]">{t}</span>
      </div>
    ))}
    <div className="ml-[33px] my-px h-px bg-[#d8d8d8]" />
    <div className="flex items-center h-[22px] whitespace-nowrap">
      <Check />
      <span className="ml-[11px]">Description: " AR 10-13 SC22M SRM Series II"</span>
    </div>
  </div>
);

const StatusBar = () => (
  <div className="flex h-[34px] shrink-0 bg-[#f0f0f3] text-[12px] text-[#333]">
    <div className="w-[1104px] shrink-0 pl-[3px] flex items-center pt-[4px]">Sembol özniteliği özelliklerini değiştir</div>
    <div className="w-[602px] shrink-0 mt-[4px] border-t border-l border-[#bcbcbc] flex items-center pl-[3px] text-[#444] whitespace-nowrap">(A) X : 71.4573, Y : 173.6960</div>
    <div className="flex items-center gap-[3px] pl-[12px] mt-[4px]">
      <div className="w-[31px] h-[29px] bg-[#c8ced6] flex items-center justify-center">
        <svg width="22" height="24" viewBox="0 0 22 24" fill="none" stroke="#2e6f94"><path d="M1 3h20M1 7h20M1 11h20M1 15h20M1 19h20M1 23h20M3 0v24M7 0v24M11 0v24M15 0v24M19 0v24" /></svg>
      </div>
      <div className="w-[31px] h-[29px] bg-[#c8ced6] flex items-center justify-center">
        <svg width="22" height="22" viewBox="0 0 22 22" fill="none" stroke="#333"><path d="M2 11L20 2v18zM2 11h18" strokeWidth="1.300" /></svg>
      </div>
      <div className="w-[31px] h-[29px] bg-[#c8ced6] flex items-center justify-center">
        <svg width="18" height="24" viewBox="0 0 18 24" fill="none"><path d="M4 2v8" stroke="#2e6f94" /><rect x="2" y="1" width="4" height="4" fill="#2e6f94" /><path d="M6 9v12l3-3 3 5 2-1-3-5h4z" fill="#fff" stroke="#222" /></svg>
      </div>
      <div className="w-[31px] h-[29px] flex items-center justify-center">
        <svg width="22" height="22" viewBox="0 0 22 22"><path d="M0 3h22v2H0zM0 9h22v3H0zM0 16h22v5H0z" fill="#222" /></svg>
      </div>
      <div className="w-[31px] h-[29px] bg-[#c8ced6] flex items-center justify-center">
        <svg width="24" height="24" viewBox="0 0 24 24" fill="none"><rect x="1" y="1" width="12" height="13" fill="#fff" stroke="#333" /><path d="M10 8v12l3-3 3 5 2-1-3-5h4z" fill="#fff" stroke="#222" /><path d="M21 1v12" stroke="#222" strokeWidth="2" /><path d="M1 20h14" stroke="#222" strokeWidth="2" /><rect x="19" y="17" width="3" height="6" fill="#2e6f94" /></svg>
      </div>
      <div className="w-[31px] h-[29px] bg-[#e3e6ea] flex items-center justify-center">
        <svg width="18" height="24" viewBox="0 0 18 24" fill="none"><circle cx="6" cy="14" r="2.500" fill="#2e6f94" /><circle cx="12" cy="14" r="2.500" fill="#5f9cc0" /><path d="M2 23c0-5 2-6 4-6s4 1 4 6zM8 23c0-5 2-6 4-6s4 1 4 6z" fill="#2e6f94" /><path d="M4 8c3-3 7-3 10 0M5 5c2.500-2 5.500-2 8 0M6 2c2-1 4-1 6 0" stroke="#444" /></svg>
      </div>
    </div>
  </div>
);

const Cube = ({ top, year = true, bolt }) => (
  <svg width="28" height="34" viewBox="0 0 28 34" className="font-['Liberation_Sans',sans-serif]">
    <path d="M3 6l11-5 11 5v16l-11 5-11-5z" fill="#9c1c1e" />
    <path d="M3 6l11 5 11-5-11-5z" fill="#c6343a" />
    <text x={bolt ? 5 : 4} y="21" fontSize="11" fontWeight="700" fill="#f3f3f3">{top}</text>
    {bolt && <path d="M20 9l-4 7h3l-2 7 6-9h-3z" fill="#f6c232" />}
    {year && <text x="2" y="33" fontSize="10.500" fontWeight="700" fill="#fff" stroke="#111" strokeWidth=".3">2022</text>}
  </svg>
);

const apps = [
  <svg key="ex" width="24" height="26" viewBox="0 0 24 26"><path d="M2 1h18l2 2v22H2z" fill="#f6cd55" /><path d="M2 5h20v20H2z" fill="#e8a83a" /><path d="M6 16h12v9h-3v-5H9v5H6z" fill="#3d8fc4" /></svg>,
  <svg key="mail" width="26" height="26" viewBox="0 0 26 26"><path d="M13 0l12 10v16H1V10z" fill="#2e9ae0" /><path d="M1 10l12 8 12-8v16H1z" fill="#63c0f0" /></svg>,
  <svg key="ol" width="28" height="30" viewBox="0 0 28 30" className="font-['Liberation_Sans',sans-serif]"><rect x="8" y="1" width="17" height="14" fill="#2c7bd0" /><rect x="1" y="5" width="15" height="16" fill="#0f5cb0" /><text x="3.500" y="18" fontSize="13" fontWeight="700" fill="#fff">O</text><rect x="12" y="15" width="16" height="14" fill="#e7c08a" /><path d="M12 15l8 7 8-7" fill="none" stroke="#8a6a3c" /></svg>,
  <svg key="tm" width="28" height="32" viewBox="0 0 28 32" className="font-['Liberation_Sans',sans-serif]"><circle cx="18" cy="5" r="4" fill="#6a6fc6" /><rect x="15" y="10" width="11" height="13" rx="3" fill="#6a6fc6" /><rect x="1" y="7" width="16" height="16" fill="#4c52ab" /><text x="5" y="20" fontSize="13" fontWeight="700" fill="#fff">T</text><circle cx="20" cy="24" r="6" fill="#5bb04a" stroke="#fff" /><path d="M17 24l2 2 4-4" stroke="#fff" fill="none" strokeWidth="1.500" /></svg>,
  <svg key="ch" width="26" height="26" viewBox="0 0 26 26"><circle cx="13" cy="13" r="12.500" fill="#e34133" /><path d="M13 13L2 7A12.500 12.500 0 0 0 13 25.500z" fill="#2ba24c" /><path d="M13 13l11-6a12.500 12.500 0 0 1-11 18.500z" fill="#f8c22c" /><circle cx="13" cy="13" r="6" fill="#fff" /><circle cx="13" cy="13" r="4.600" fill="#3d82ed" /></svg>,
  <svg key="tv" width="26" height="26" viewBox="0 0 26 26"><rect width="26" height="26" rx="3" fill="#0b1a55" /><circle cx="13" cy="13" r="9" fill="#fff" /><path d="M6 13l3.500-3v2h7v-2l3.500 3-3.500 3v-2h-7v2z" fill="#1a5fc8" /></svg>,
  <svg key="sh" width="24" height="28" viewBox="0 0 24 28"><path d="M12 1c3 2 6 3 10 3v10c0 6-5 10-10 13C7 24 2 20 2 14V4c4 0 7-1 10-3z" fill="#1d74b8" stroke="#9cc9e8" /><rect x="7" y="9" width="10" height="8" fill="#cfe6f6" /></svg>,
  <svg key="wd" width="26" height="26" viewBox="0 0 26 26" className="font-['Liberation_Sans',sans-serif]"><rect x="7" y="2" width="18" height="22" fill="#2b7cd3" /><rect x="7" y="13" width="18" height="11" fill="#185abd" /><rect x="1" y="6" width="14" height="14" fill="#1656ac" /><text x="2.500" y="17.500" fontSize="11" fontWeight="700" fill="#fff">W</text></svg>,
  <svg key="st" width="24" height="28" viewBox="0 0 24 28"><path d="M1 1h22v20l-6 6H1z" fill="#f7d21c" /><path d="M23 18l-6 9v-7z" fill="#333" /></svg>,
];

const Taskbar = () => (
  <div className="flex items-center h-[40px] shrink-0 bg-gradient-to-r from-[#24373f] to-[#182743] text-white relative">
    <div className="w-[47px] flex justify-center">
      <svg width="18" height="18" viewBox="0 0 18 18"><path d="M0 3l7.500-1.200V8.500H0zM8.500 1.600L18 0v8.500H8.500zM0 9.500h7.500v6.700L0 15zM8.500 9.500H18V18l-9.500-1.500z" fill="#fff" /></svg>
    </div>
    <div className="w-[52px] flex justify-center">
      <svg width="16" height="18" viewBox="0 0 16 18" fill="none" stroke="#fff"><path d="M1 1.500h14M1 16.500h14" strokeWidth="1.400" /><rect x="1" y="4.500" width="10" height="9" strokeWidth="1.300" /><path d="M14 4v10" strokeWidth="1.600" /></svg>
    </div>
    <div className="flex">
      {apps.map((a, i) => (
        <div key={i} className="w-[49px] h-[40px] flex items-center justify-center relative">
          {a}
          <div className="absolute bottom-0 left-[4px] right-[4px] h-[2px] bg-[#7fb6de]" />
        </div>
      ))}
      <div className="w-[49px] h-[40px] bg-[#4a5a63] flex items-center justify-center relative pt-[2px]">
        <Cube top="S" bolt />
        <div className="absolute bottom-0 left-0 right-0 h-[2px] bg-[#7fb6de]" />
      </div>
      <div className="w-[49px] h-[40px] flex items-center justify-center relative">
        <svg width="27" height="28" viewBox="0 0 27 28"><path d="M2 26l2-7C-1 9 6 1 14 1c7 0 12 6 12 12 0 9-11 15-18 11z" fill="#f4f4f4" stroke="#ddd" /><path d="M13.500 3.500C8 3.500 3 8 4 14c.2 2 1 3 1.500 4.500L4.500 23l4.300-1.100c6 3 14.700-1.400 14.700-8.900 0-5-4-9.500-10-9.500z" fill="#25b34a" /><path d="M9.500 8c1.500-1 2 1 2.500 2.500l-1 1.300c1 1.700 2 2.800 3.700 3.500l1.300-1.300c1.500.5 3 1.200 2.500 2.500-1.500 2.500-4.500 1.800-7.500-.5S7.500 10 9.500 8z" fill="#fff" /></svg>
        <div className="absolute bottom-0 left-[4px] right-[4px] h-[2px] bg-[#7fb6de]" />
      </div>
      <div className="w-[49px] h-[40px] flex items-center justify-center relative pt-[2px]">
        <Cube top="SW" />
        <div className="absolute bottom-0 left-[4px] right-[4px] h-[2px] bg-[#7fb6de]" />
      </div>
      <div className="w-[49px] h-[40px] flex items-center justify-center relative">
        <svg width="26" height="26" viewBox="0 0 26 26" className="font-['Liberation_Sans',sans-serif]"><circle cx="15" cy="13" r="11" fill="#e7633a" /><path d="M15 2a11 11 0 0 1 11 11H15z" fill="#f2a07c" /><rect x="1" y="6" width="14" height="14" fill="#c23e1c" /><text x="4" y="17.500" fontSize="12" fontWeight="700" fill="#fff">P</text></svg>
        <div className="absolute bottom-0 left-[4px] right-[4px] h-[2px] bg-[#7fb6de]" />
      </div>
    </div>
    <div className="flex-1" />
    <div className="flex items-center">
      <ChevronUp size={16} strokeWidth={1.500} />
      <div className="ml-[7px] w-[14px] h-[12px] flex items-center justify-center">
        <svg width="14" height="14" viewBox="0 0 14 14" fill="none" stroke="#fff"><rect x="3" y="5" width="10" height="7" /><rect x="4" y="6" width="5" height="5" fill="#fff" /><path d="M3 1v3M6 1v3M1 4h7" /></svg>
      </div>
      <Wifi size={15} strokeWidth={1.600} className="ml-[11px] rotate-45" />
      <Volume2 size={15} strokeWidth={1.500} className="ml-[6px]" />
      <div className="w-[76px] text-center text-[11.500px] leading-[18px]">
        <div>14:14</div>
        <div>3.07.2023</div>
      </div>
      <div className="relative w-[34px] h-[40px] mr-[14px] flex items-center justify-center">
        <svg width="16" height="16" viewBox="0 0 16 16" className="-ml-[6px] -mt-[4px]"><path d="M1 1h14v11H6l-3 3v-3H1z" fill="#fff" /><path d="M3.500 4.500h9M3.500 7.500h9" stroke="#333" /></svg>
        <div className="absolute right-[4px] bottom-[3px] w-[17px] h-[17px] rounded-full bg-[#26313a] border border-white/70 text-[11px] leading-[15px] text-center">1</div>
      </div>
    </div>
  </div>
);

export default function App() {
  return (
    <div className="relative w-[1920px] h-[1080px] overflow-hidden flex flex-col bg-[#f0f0f3] font-['Roboto',sans-serif]">
      <TitleBar />
      <TabBar />
      <Ribbon />
      <div className="flex flex-1 min-h-0">
        <LeftPanel />
        <CenterPane />
        <RightPanel />
      </div>
      <StatusBar />
      <Taskbar />
      <ContextMenu />
      <SubMenu />
    </div>
  );
}
